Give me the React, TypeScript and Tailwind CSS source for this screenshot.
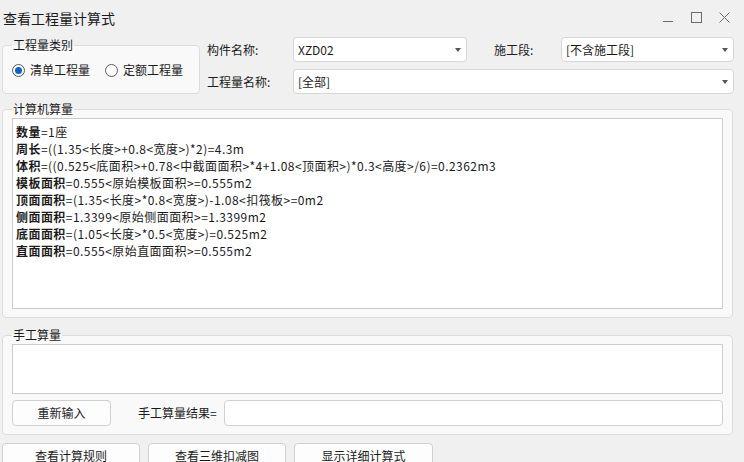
import React from 'react';

const Arrow: React.FC = () => (
  <svg width="6" height="4" viewBox="0 0 6 4" className="shrink-0">
    <path d="M0 0 L6 0 L3 4 Z" fill="#555" />
  </svg>
);

const Combo: React.FC<{ value: string; className?: string }> = ({ value, className }) => (
  <div
    className={`h-[25px] bg-white border border-[#d6d6d6] rounded-[4px] flex items-center justify-between pl-[4px] pr-[5px] ${className ?? ''}`}
  >
    <span className="text-[12px] leading-[14px] text-[#1b1b1b]">{value}</span>
    <Arrow />
  </div>
);

const Radio: React.FC<{ checked?: boolean; label: string }> = ({ checked, label }) => (
  <label className="flex items-center gap-[5px]">
    <span className="w-[13px] h-[13px] rounded-full border border-[#5a5a5a] bg-white flex items-center justify-center">
      {checked && <span className="w-[7px] h-[7px] rounded-full bg-[#0a64c8]" />}
    </span>
    <span className="text-[12px] leading-[14px]">{label}</span>
  </label>
);

const lines: [string, string][] = [
  ['数量', '=1座'],
  ['周长', '=((1.35<长度>+0.8<宽度>)*2)=4.3m'],
  ['体积', '=((0.525<底面积>+0.78<中截面面积>*4+1.08<顶面积>)*0.3<高度>/6)=0.2362m3'],
  ['模板面积', '=0.555<原始模板面积>=0.555m2'],
  ['顶面面积', '=(1.35<长度>*0.8<宽度>)-1.08<扣筏板>=0m2'],
  ['侧面面积', '=1.3399<原始侧面面积>=1.3399m2'],
  ['底面面积', '=(1.05<长度>*0.5<宽度>)=0.525m2'],
  ['直面面积', '=0.555<原始直面面积>=0.555m2'],
];

export default function App() {
  return (
    <div className="w-[744px] h-[462px] overflow-hidden bg-[#f0f0f0] text-[#1b1b1b] font-['Noto_Sans_CJK_SC',sans-serif] flex flex-col">
      {/* Title bar */}
      <div className="h-[34px] shrink-0 flex items-center justify-between pl-[3px]">
        <span className="text-[14px] leading-[16px] mt-[1px]">查看工程量计算式</span>
        <div className="flex items-center gap-[17px] pr-[14px] mt-[1px]">
          <svg width="11" height="11" viewBox="0 0 11 11">
            <path d="M0 9.5 H10" stroke="#6b6b6b" strokeWidth="1" />
          </svg>
          <svg width="11" height="11" viewBox="0 0 11 11">
            <rect x="0.5" y="0.5" width="10" height="10" fill="none" stroke="#6b6b6b" strokeWidth="1" />
          </svg>
          <svg width="11" height="11" viewBox="0 0 11 11">
            <path d="M0.5 0.5 L10.5 10.5 M10.5 0.5 L0.5 10.5" stroke="#6b6b6b" strokeWidth="1" />
          </svg>
        </div>
      </div>

      {/* Top row */}
      <div className="flex mt-[3px] pl-[2px]">
        <fieldset className="w-[198px] h-[56px] mt-[1px] border border-[#dcdcdc] rounded-[4px] bg-[#f9f9f9] px-[9px]">
          <legend className="text-[12px] leading-[14px] px-[1px]">工程量类别</legend>
          <div className="flex items-center gap-[15px] mt-[11px]">
            <Radio checked label="清单工程量" />
            <Radio label="定额工程量" />
          </div>
        </fieldset>
        <div className="ml-[7px] flex flex-col gap-[7px]">
          <div className="flex items-center">
            <span className="w-[86px] text-[12px] leading-[14px]">构件名称:</span>
            <Combo value="XZD02" className="w-[174px]" />
            <span className="ml-[27px] w-[67px] text-[12px] leading-[14px]">施工段:</span>
            <Combo value="[不含施工段]" className="w-[173px]" />
          </div>
          <div className="flex items-center">
            <span className="w-[86px] text-[12px] leading-[14px]">工程量名称:</span>
            <Combo value="[全部]" className="w-[441px]" />
          </div>
        </div>
      </div>

      {/* 计算机算量 */}
      <fieldset className="ml-[2px] mt-[8px] w-[731px] border border-[#dcdcdc] rounded-[4px] bg-[#f9f9f9] px-[9px] pb-[8px]">
        <legend className="text-[12px] leading-[14px] px-[1px]">计算机算量</legend>
        <div className="mt-[2px] h-[191px] bg-white border border-[#cbcbcb] pt-[4px] pl-[3px]">
          {lines.map(([k, v]) => (
            <div key={k} className="text-[12px] leading-[17px] whitespace-nowrap tracking-[0.45px]">
              <span className="font-bold">{k}</span>
              <span>{v}</span>
            </div>
          ))}
        </div>
      </fieldset>

      {/* 手工算量 */}
      <fieldset className="ml-[2px] mt-[10px] w-[731px] border border-[#dcdcdc] rounded-[4px] bg-[#f9f9f9] px-[9px] pb-[8px]">
        <legend className="text-[12px] leading-[14px] px-[1px]">手工算量</legend>
        <div className="mt-[2px] h-[50px] bg-white border border-[#cbcbcb]" />
        <div className="flex items-center mt-[6px]">
          <button className="w-[99px] h-[26px] bg-[#fdfdfd] border border-[#d0d0d0] rounded-[4px] text-[12px] leading-[14px]">
            重新输入
          </button>
          <span className="ml-[27px] w-[86px] text-[12px] leading-[14px]">手工算量结果=</span>
          <div className="flex-1 h-[26px] bg-white border border-[#d0d0d0] rounded-[4px]" />
        </div>
      </fieldset>

      {/* Bottom buttons */}
      <div className="flex gap-[8px] pl-[2px] mt-[8px]">
        <button className="w-[138px] h-[28px] shrink-0 bg-[#fdfdfd] border border-[#d0d0d0] rounded-[4px] text-[12px] leading-[14px] pb-[3px]">
          查看计算规则
        </button>
        <button className="w-[138px] h-[28px] shrink-0 bg-[#fdfdfd] border border-[#d0d0d0] rounded-[4px] text-[12px] leading-[14px] pb-[3px]">
          查看三维扣减图
        </button>
        <button className="w-[139px] h-[28px] shrink-0 bg-[#fdfdfd] border border-[#d0d0d0] rounded-[4px] text-[12px] leading-[14px] pb-[3px]">
          显示详细计算式
        </button>
      </div>
    </div>
  );
}
